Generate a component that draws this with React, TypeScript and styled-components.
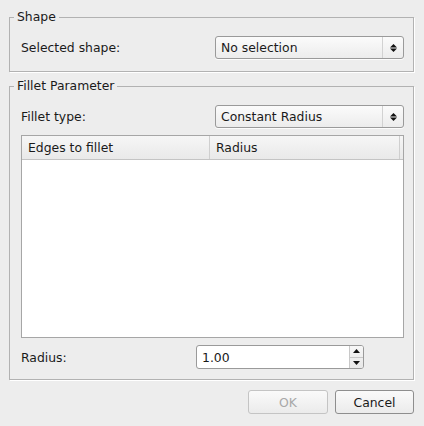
import React from "react";
import styled, { createGlobalStyle } from "styled-components";

const Global = createGlobalStyle`
  html, body { margin: 0; padding: 0; background: #ededed; }
  body {
    font-family: "DejaVu Sans", "Liberation Sans", sans-serif;
    font-size: 12.4px;
    color: #1a1a1a;
  }
  * { box-sizing: border-box; }
`;

const Dialog = styled.div`
  width: 424px;
  height: 426px;
  padding: 10px 10px 14px 9px;
  display: flex;
  flex-direction: column;
  gap: 7px;
`;

const Group = styled.fieldset`
  margin: 0;
  padding: 0;
  min-width: 0;
  border: 1px solid #b2b2b2;
  box-shadow: 1px 1px 0 #ffffff;
  width: 405px;
`;

const Legend = styled.legend`
  margin-left: 4px;
  padding: 0 3px;
  line-height: 14px;
  font-size: 12.4px;
`;

const GroupBody = styled.div<{ $bottom: number }>`
  padding: 12px 9px ${(p) => p.$bottom}px 11px;
  display: flex;
  flex-direction: column;
  gap: 7px;
`;

const FormRow = styled.div`
  display: flex;
  align-items: center;
  justify-content: space-between;
`;

const Label = styled.span`
  white-space: nowrap;
`;

const Combo = styled.div`
  width: 189px;
  height: 23px;
  border: 1px solid #9a9a9a;
  border-radius: 3px;
  background: linear-gradient(#fbfbfb, #ececec);
  display: flex;
  align-items: stretch;
  box-shadow: 0 1px 0 rgba(255, 255, 255, 0.8);
`;

const ComboText = styled.span`
  flex: 1;
  padding-left: 5px;
  display: flex;
  align-items: center;
`;

const ComboArrow = styled.span`
  width: 21px;
  border-left: 1px solid #d2d2d2;
  display: flex;
  align-items: center;
  justify-content: center;
`;

const UpDown = () => (
  <svg width="7" height="8" viewBox="0 0 7 8">
    <path d="M3.5 0 L7 3.5 L0 3.5 Z" fill="#111" />
    <path d="M0 4.5 L7 4.5 L3.5 8 Z" fill="#111" />
  </svg>
);

const Table = styled.div`
  height: 203px;
  border: 1px solid #a6a6a6;
  background: #ffffff;
  display: flex;
  flex-direction: column;
`;

const Header = styled.div`
  height: 24px;
  display: grid;
  grid-template-columns: 188px 190px 1fr;
  background: linear-gradient(#f6f6f6, #e9e9e9);
  border-bottom: 1px solid #c4c4c4;
`;

const HeaderCell = styled.div<{ $last?: boolean }>`
  padding-left: 6px;
  display: flex;
  align-items: center;
  border-right: ${(p) => (p.$last ? "none" : "1px solid #cfcfcf")};
`;

const RadiusRow = styled.div`
  display: grid;
  grid-template-columns: 175px 168px;
  align-items: center;
`;

const Spin = styled.div`
  height: 24px;
  border: 1px solid #9a9a9a;
  border-radius: 3px;
  background: #ffffff;
  display: flex;
  overflow: hidden;
`;

const SpinText = styled.span`
  flex: 1;
  padding-left: 5px;
  display: flex;
  align-items: center;
`;

const SpinButtons = styled.div`
  width: 14px;
  border-left: 1px solid #c8c8c8;
  display: flex;
  flex-direction: column;
  background: linear-gradient(#f7f7f7, #e8e8e8);
`;

const SpinBtn = styled.div<{ $top?: boolean }>`
  flex: 1;
  display: flex;
  align-items: center;
  justify-content: center;
  border-bottom: ${(p) => (p.$top ? "1px solid #c8c8c8" : "none")};
`;

const ButtonRow = styled.div`
  margin-top: 3px;
  display: flex;
  justify-content: flex-end;
  gap: 7px;
`;

const Button = styled.button<{ $w: number }>`
  width: ${(p) => p.$w}px;
  height: 24px;
  font-family: inherit;
  font-size: 12.4px;
  color: ${(p) => (p.disabled ? "#a8a8a8" : "#1a1a1a")};
  border: 1px solid ${(p) => (p.disabled ? "#c4c4c4" : "#8e8e8e")};
  border-radius: 3px;
  background: linear-gradient(#fafafa, #ebebeb);
  padding: 0;
`;

export default function App() {
  return (
    <>
      <Global />
      <Dialog>
        <Group>
          <Legend>Shape</Legend>
          <GroupBody $bottom={12}>
            <FormRow>
              <Label>Selected shape:</Label>
              <Combo>
                <ComboText>No selection</ComboText>
                <ComboArrow>
                  <UpDown />
                </ComboArrow>
              </Combo>
            </FormRow>
          </GroupBody>
        </Group>
        <Group>
          <Legend>Fillet Parameter</Legend>
          <GroupBody $bottom={10}>
            <FormRow>
              <Label>Fillet type:</Label>
              <Combo>
                <ComboText>Constant Radius</ComboText>
                <ComboArrow>
                  <UpDown />
                </ComboArrow>
              </Combo>
            </FormRow>
            <Table>
              <Header>
                <HeaderCell>Edges to fillet</HeaderCell>
                <HeaderCell>Radius</HeaderCell>
                <HeaderCell $last />
              </Header>
            </Table>
            <RadiusRow>
              <Label>Radius:</Label>
              <Spin>
                <SpinText>1.00</SpinText>
                <SpinButtons>
                  <SpinBtn $top>
                    <svg width="7" height="4" viewBox="0 0 7 4">
                      <path d="M3.5 0 L7 4 L0 4 Z" fill="#111" />
                    </svg>
                  </SpinBtn>
                  <SpinBtn>
                    <svg width="7" height="4" viewBox="0 0 7 4">
                      <path d="M0 0 L7 0 L3.5 4 Z" fill="#111" />
                    </svg>
                  </SpinBtn>
                </SpinButtons>
              </Spin>
            </RadiusRow>
          </GroupBody>
        </Group>
        <ButtonRow>
          <Button $w={80} disabled>OK</Button>
          <Button $w={79}>Cancel</Button>
        </ButtonRow>
      </Dialog>
    </>
  );
}
